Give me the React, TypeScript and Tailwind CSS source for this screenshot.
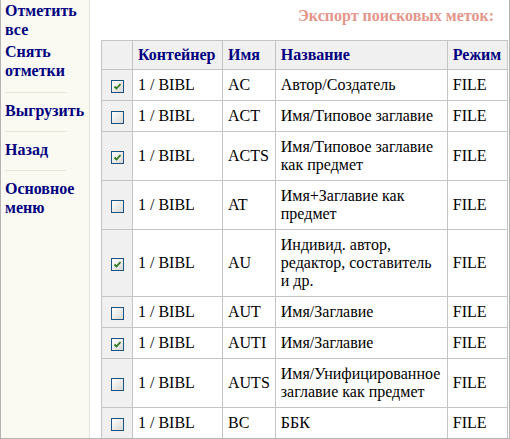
import React from 'react';

type Row = { cont: string; name: string; title: string; mode: string; checked: boolean };

const rows: Row[] = [
  { cont: '1 / BIBL', name: 'AC', title: 'Автор/Создатель', mode: 'FILE', checked: true },
  { cont: '1 / BIBL', name: 'ACT', title: 'Имя/Типовое заглавие', mode: 'FILE', checked: false },
  { cont: '1 / BIBL', name: 'ACTS', title: 'Имя/Типовое заглавие как предмет', mode: 'FILE', checked: true },
  { cont: '1 / BIBL', name: 'AT', title: 'Имя+Заглавие как предмет', mode: 'FILE', checked: false },
  { cont: '1 / BIBL', name: 'AU', title: 'Индивид. автор, редактор, составитель и др.', mode: 'FILE', checked: true },
  { cont: '1 / BIBL', name: 'AUT', title: 'Имя/Заглавие', mode: 'FILE', checked: false },
  { cont: '1 / BIBL', name: 'AUTI', title: 'Имя/Заглавие', mode: 'FILE', checked: true },
  { cont: '1 / BIBL', name: 'AUTS', title: 'Имя/Унифицированное заглавие как предмет', mode: 'FILE', checked: false },
  { cont: '1 / BIBL', name: 'BC', title: 'ББК', mode: 'FILE', checked: false },
];

const CheckBox: React.FC<{ checked: boolean }> = ({ checked }) => (
  <span className="inline-flex w-[13px] h-[13px] border border-[#1c5180] bg-gradient-to-br from-white to-[#d8d8d4] items-center justify-center align-middle">
    {checked && (
      <svg width="9" height="9" viewBox="0 0 9 9">
        <path d="M1.5 4.5 L3.5 6.5 L7.5 2" fill="none" stroke="#2f7a1f" strokeWidth="1.8" />
      </svg>
    )}
  </span>
);

const Sep = () => <div className="w-[61px] h-px bg-[#e6e6d6] mt-[11px] mb-[8px]" />;

export default function App() {
  const link = 'block text-[#000080] font-bold text-[16px] leading-[19px]';
  const th = 'border border-[#c4c4c4] bg-[#f0f0f0] text-left text-[#000080] font-bold px-[5px] py-[5px] leading-[18px]';
  const td = 'border border-[#c4c4c4] px-[5px] py-[6px] leading-[18px] align-middle';

  return (
    <div
      className="h-[439px] w-[510px] overflow-hidden border-l border-r border-b border-[#b4b4b4] flex bg-white text-black"
      style={{ fontFamily: '"Liberation Serif", "Times New Roman", serif' }}
    >
      <div className="w-[89px] shrink-0 bg-[#fafaf2] border-r border-[#e4e4dc] pl-[4px] pt-px">
        <a className={link}>Отметить все</a>
        <a className={link + ' mt-[3px]'}>Снять отметки</a>
        <div className="w-[61px] h-px bg-[#e6e6d6] mt-[12px] mb-[8px]" />
        <a className={link}>Выгрузить</a>
        <Sep />
        <a className={link}>Назад</a>
        <Sep />
        <a className={link}>Основное меню</a>
      </div>
      <div className="flex-1 min-w-0">
        <div className="text-right pr-[15px] pt-[7px] text-[16px] leading-[18px] font-bold text-[#e4968a]">
          Экспорт поисковых меток:
        </div>
        <table className="ml-[11px] mt-[15px] border-collapse table-fixed text-[16px]">
          <colgroup>
            <col className="w-[31px]" />
            <col className="w-[90px]" />
            <col className="w-[51px]" />
            <col className="w-[172px]" />
            <col className="w-[60px]" />
          </colgroup>
          <thead>
            <tr>
              <th className={th}></th>
              <th className={th}>Контейнер</th>
              <th className={th}>Имя</th>
              <th className={th}>Название</th>
              <th className={th}>Режим</th>
            </tr>
          </thead>
          <tbody>
            {rows.map((r, i) => (
              <tr key={i}>
                <td className={td + ' bg-[#f0f0f0] text-center'}>
                  <CheckBox checked={r.checked} />
                </td>
                <td className={td}>{r.cont}</td>
                <td className={td}>{r.name}</td>
                <td className={td}>{r.title}</td>
                <td className={td}>{r.mode}</td>
              </tr>
            ))}
          </tbody>
        </table>
      </div>
    </div>
  );
}
